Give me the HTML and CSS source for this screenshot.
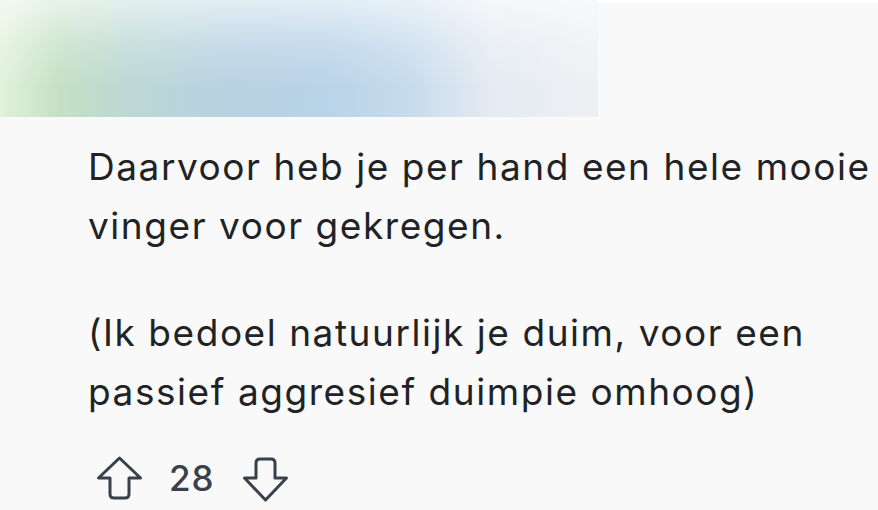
FILE: index.html
```html
<!DOCTYPE html>
<html lang="nl">
<head>
<meta charset="utf-8">
<link rel="stylesheet" href="styles.css">
</head>
<body>
<div class="header">
  <div class="blur"></div>
  <div class="filler"></div>
</div>
<div class="comment">
  <p class="para">Daarvoor heb je per hand een hele mooie vinger voor gekregen.</p>
  <p class="para">(Ik bedoel natuurlijk je duim, voor een passief aggresief duimpie omhoog)</p>
  <div class="votes">
    <svg class="arrow" width="48" height="48" viewBox="0 0 48 48" fill="none" stroke="#37404b" stroke-width="3" stroke-linejoin="round">
      <path d="M24.5 4 L3.5 24 L15 24 L15 40 Q15 44 19 44 L30 44 Q34 44 34 40 L34 24 L45.5 24 Z"/>
    </svg>
    <span class="count">28</span>
    <svg class="arrow" width="48" height="48" viewBox="0 0 48 48" fill="none" stroke="#37404b" stroke-width="3" stroke-linejoin="round">
      <path d="M24.5 46 L3.5 24 L15 24 L15 9 Q15 5 19 5 L30 5 Q34 5 34 9 L34 24 L45.5 24 Z"/>
    </svg>
  </div>
</div>
</body>
</html>
```
FILE: styles.css
```css
html, body {
  margin: 0;
  padding: 0;
  background: #f9f9f9;
}
body {
  width: 878px;
  height: 510px;
  overflow: hidden;
  font-family: Inter, "Liberation Sans", sans-serif;
  color: #1f2326;
}
.header {
  display: flex;
  height: 117px;
}
.blur {
  width: 598px;
  height: 117px;
  background:
    linear-gradient(to bottom, rgba(255,255,255,0.6) 0%, rgba(255,255,255,0.2) 40%, rgba(255,255,255,0) 75%),
    linear-gradient(to right, #e2f2dc 0%, #c4e0c4 10%, #bcd8d4 21%, #b8d2e2 38%, #b9d3e8 55%, #c6dbec 68%, #e4ebf2 82%, #eef0f3 100%);
}
.filler {
  flex: 1;
  border-top: 3px solid #ffffff;
}
.comment {
  padding-left: 88px;
  margin-top: 20px;
}
.para {
  margin: 0 0 48px 0;
  font-size: 37px;
  line-height: 59px;
  letter-spacing: 1.55px;
}
.para:last-of-type {
  margin-bottom: 33px;
}
.votes {
  display: flex;
  align-items: center;
  gap: 26px;
  margin-left: 7px;
  height: 48px;
}
.count {
  font-size: 35px;
  font-weight: 500;
  letter-spacing: 1px;
  color: #37404b;
}
.arrow {
  display: block;
}
```
